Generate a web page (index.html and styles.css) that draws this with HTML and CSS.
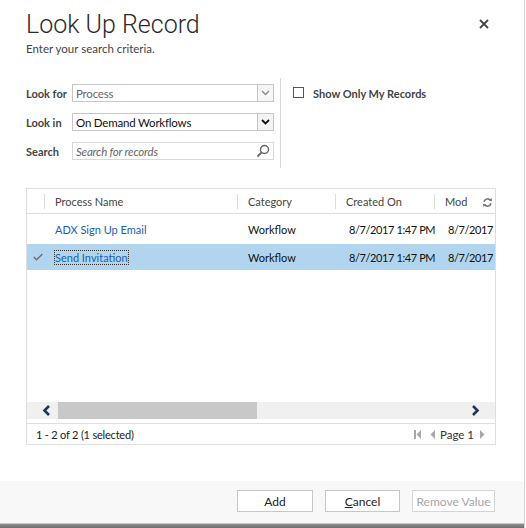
FILE: index.html
```html
<!DOCTYPE html>
<html lang="en">
<head>
    <meta charset="UTF-8">
    <title>Look Up Record</title>
    <link rel="stylesheet" href="styles.css">
</head>
<body>

<div class="dialog">
    <div class="head">
        <div>
            <h1 class="title">Look Up Record</h1>
            <div class="subtitle">Enter your search criteria.</div>
        </div>
        <button class="close" title="Close">
            <svg width="10" height="10" viewBox="0 0 10 10"><path d="M1 1L9 9M9 1L1 9" stroke="#444" stroke-width="1.8"/></svg>
        </button>
    </div>

    <div class="criteria">
        <div class="fields">
            <div class="field">
                <span class="label">Look for</span>
                <div class="select disabled">
                    <span class="value">Process</span>
                    <span class="arrow"><svg width="9" height="6" viewBox="0 0 9 6"><path d="M1 1L4.5 4.5L8 1" fill="none" stroke="#888" stroke-width="1.3"/></svg></span>
                </div>
            </div>
            <div class="field">
                <span class="label">Look in</span>
                <div class="select">
                    <span class="value">On Demand Workflows</span>
                    <span class="arrow"><svg width="9" height="6" viewBox="0 0 9 6"><path d="M1 1L4.5 4.5L8 1" fill="none" stroke="#111" stroke-width="1.8"/></svg></span>
                </div>
            </div>
            <div class="field">
                <span class="label">Search</span>
                <div class="select search">
                    <span class="value placeholder">Search for records</span>
                    <span class="lens"><svg width="14" height="14" viewBox="0 0 14 14"><circle cx="8.5" cy="5.5" r="4" fill="none" stroke="#666" stroke-width="1.4"/><path d="M5.6 8.4L1.5 12.5" stroke="#666" stroke-width="1.8"/></svg></span>
                </div>
            </div>
        </div>
        <div class="options">
            <label class="check"><span class="box"></span>Show Only My Records</label>
        </div>
    </div>

    <div class="grid">
        <div class="grid-head">
            <div class="hcell"></div>
            <div class="hcell">Process Name</div>
            <div class="hcell">Category</div>
            <div class="hcell">Created On</div>
            <div class="hcell last">Mod
                <svg class="refresh" width="11" height="11" viewBox="0 0 12 12"><path d="M2.2 5.2A4 4 0 0 1 9.3 3.6" fill="none" stroke="#777" stroke-width="1.8"/><path d="M7.4 3.8L11 4.6L10.4 1Z" fill="#777"/><path d="M9.8 6.8A4 4 0 0 1 2.7 8.4" fill="none" stroke="#777" stroke-width="1.8"/><path d="M4.6 8.2L1 7.4L1.6 11Z" fill="#777"/></svg>
            </div>
        </div>
        <div class="grid-body">
            <div class="row">
                <div class="cell"></div>
                <div class="cell"><a class="link">ADX Sign Up Email</a></div>
                <div class="cell">Workflow</div>
                <div class="cell date">8/7/2017 1:47 PM</div>
                <div class="cell date">8/7/2017 4:12 PM</div>
            </div>
            <div class="row selected">
                <div class="cell tick"><svg width="10" height="8" viewBox="0 0 10 8"><path d="M0.8 4L3.6 6.8L9.4 1" fill="none" stroke="#6b6b6b" stroke-width="1.3"/></svg></div>
                <div class="cell"><a class="link focus">Send Invitation</a></div>
                <div class="cell">Workflow</div>
                <div class="cell date">8/7/2017 1:47 PM</div>
                <div class="cell date">8/7/2017 6:05 PM</div>
            </div>
        </div>
        <div class="hscroll">
            <span class="sbtn left"><svg width="9" height="11" viewBox="0 0 9 11"><path d="M7 1L2.5 5.5L7 10" fill="none" stroke="#1d3557" stroke-width="2.6"/></svg></span>
            <span class="track"><span class="thumb"></span></span>
            <span class="sbtn right"><svg width="9" height="11" viewBox="0 0 9 11"><path d="M2 1L6.5 5.5L2 10" fill="none" stroke="#1d3557" stroke-width="2.6"/></svg></span>
        </div>
        <div class="status">
            <span class="count">1 - 2 of 2 (1 selected)</span>
            <span class="pager">
                <svg width="7" height="9" viewBox="0 0 7 9"><rect x="0" y="0" width="2" height="9" fill="#a8a8a8"/><path d="M7 0V9L2.5 4.5Z" fill="#a8a8a8"/></svg>
                <svg class="prev" width="5" height="9" viewBox="0 0 5 9"><path d="M5 0V9L0.5 4.5Z" fill="#a8a8a8"/></svg>
                <span class="page">Page 1</span>
                <svg width="5" height="9" viewBox="0 0 5 9"><path d="M0 0V9L4.5 4.5Z" fill="#a8a8a8"/></svg>
            </span>
        </div>
    </div>

    <div class="footer">
        <button class="btn">Add</button>
        <button class="btn"><u>C</u>ancel</button>
        <button class="btn" disabled>Remove Value</button>
    </div>
    <div class="taskbar"></div>
</div>

</body>
</html>
```

FILE: styles.css
```css
body { margin: 0; background: #fff; font-family: Lato, Roboto, sans-serif; font-size: 11px; color: #222; }
.dialog { width: 525px; height: 528px; box-sizing: border-box; border-right: 1px solid #d4d4d4; display: flex; flex-direction: column; }

.head { display: flex; justify-content: space-between; align-items: flex-start; padding: 10px 34px 0 26px; }
.title { margin: 0; font-family: Roboto, sans-serif; font-size: 25px; line-height: 30px; font-weight: 300; color: #2b2b2b; }
.subtitle { margin-top: 1px; font-size: 11.5px; line-height: 16px; color: #444; }
.close { border: none; background: none; padding: 0; margin-top: 8px; width: 12px; height: 12px; display: flex; align-items: center; justify-content: center; }

.criteria { display: flex; margin: 21px 0 0 26px; }
.fields { width: 248px; padding: 6px 0 8px; display: flex; flex-direction: column; gap: 11px; margin-right: 6px; }
.field { display: flex; align-items: center; height: 18px; }
.label { width: 46px; font-weight: bold; color: #444; }
.select { flex: 1; height: 18px; box-sizing: border-box; border: 1px solid #c6c6c6; display: flex; align-items: center; justify-content: space-between; font-size: 11.5px; color: #111; }
.select .value { padding-left: 3px; letter-spacing: -0.2px; }
.select.disabled .value { color: #666; }
.arrow { width: 16px; height: 16px; box-sizing: border-box; border-left: 1px solid #c6c6c6; background: #f3f3f3; display: flex; align-items: center; justify-content: center; }
.select.disabled .arrow { background: #f6f6f6; }
.search { border-color: #d8d8d8; }
.placeholder { font-style: italic; color: #666; }
.lens { width: 16px; display: flex; justify-content: center; margin-right: 2px; }
.options { border-left: 1px solid #d8d8d8; padding: 9px 0 0 12px; }
.check { display: flex; align-items: center; font-weight: bold; color: #444; }
.box { width: 11px; height: 11px; border: 1px solid #555; box-sizing: border-box; margin-right: 9px; margin-top: -3px; }

.grid { margin: 20px 0 0 26px; width: 470px; height: 257px; box-sizing: border-box; border: 1px solid #dedede; display: flex; flex-direction: column; overflow: hidden; }
.grid-head, .row { display: grid; grid-template-columns: 18px 193px 98px 99px 60px; }
.grid-head { height: 24px; border-bottom: 1px solid #dedede; color: #444; }
.hcell { display: flex; align-items: center; padding-left: 10px; white-space: nowrap; overflow: hidden; background: linear-gradient(#dcdcdc, #dcdcdc) no-repeat right center / 1px 15px; }
.hcell:first-child { padding: 0; }
.hcell.last { background: none; justify-content: space-between; padding-right: 2px; }
.refresh { margin-top: 2px; }
.grid-body { flex: 1; padding-top: 2px; display: flex; flex-direction: column; gap: 2px; }
.row { height: 26px; color: #111; }
.row.selected { background: #b1d5ee; }
.cell { display: flex; align-items: center; padding-left: 10px; white-space: nowrap; overflow: hidden; }
.cell:first-child { padding-left: 0; }
.cell.date { padding-left: 13px; letter-spacing: -0.4px; }
.tick { justify-content: center; padding-left: 4px !important; }
.link { color: #1a5eb4; }
.link.focus { outline: 1px dotted #333; outline-offset: 0; }

.hscroll { height: 17px; background: #f0f0f0; display: flex; align-items: center; margin-bottom: 4px; }
.sbtn { width: 31px; display: flex; align-items: center; }
.sbtn.left { padding-left: 15px; box-sizing: border-box; }
.sbtn.right { width: 30px; padding-left: 6px; box-sizing: border-box; }
.track { flex: 1; height: 17px; }
.thumb { display: block; width: 199px; height: 17px; background: #c8c8c8; }
.status { height: 20px; border-top: 1px solid #dedede; display: flex; align-items: center; justify-content: space-between; padding: 0 10px 0 9px; color: #222; }
.count { letter-spacing: -0.2px; }
.pager { display: flex; align-items: center; }
.pager .prev { margin-left: 9px; }
.page { margin: 0 6px 0 5px; color: #333; font-size: 11.5px; }

.footer { margin-top: auto; height: 42px; box-sizing: border-box; background: #f8f8f8; display: flex; justify-content: flex-end; gap: 12px; padding: 9px 29px 0 0; }
.btn { width: 76px; height: 22px; background: #fff; border: 1px solid #c6c6c6; font-family: inherit; font-size: 12px; color: #222; padding: 0; }
.btn:nth-child(2) { width: 75px; }
.btn[disabled] { width: 83px; color: #a6a6a6; border-color: #d4d4d4; }
.taskbar { height: 5px; background: linear-gradient(#c8c8c8 0, #c8c8c8 1px, #8e8e8e 1px, #6e6e6e 100%); }
```
